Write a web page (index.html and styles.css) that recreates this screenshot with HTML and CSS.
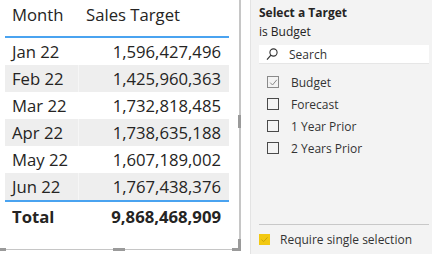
FILE: index.html
```html
<!DOCTYPE html>
<html>
<head>
<meta charset="utf-8">
<link rel="stylesheet" href="styles.css">
</head>
<body>
<div class="page">
  <div class="visual">
    <div class="table">
      <div class="row head">
        <div class="c1">Month</div>
        <div class="c2 left">Sales Target</div>
      </div>
      <div class="row"><div class="c1">Jan 22</div><div class="c2">1,596,427,496</div></div>
      <div class="row alt"><div class="c1">Feb 22</div><div class="c2">1,425,960,363</div></div>
      <div class="row"><div class="c1">Mar 22</div><div class="c2">1,732,818,485</div></div>
      <div class="row alt"><div class="c1">Apr 22</div><div class="c2">1,738,635,188</div></div>
      <div class="row"><div class="c1">May 22</div><div class="c2">1,607,189,002</div></div>
      <div class="row alt"><div class="c1">Jun 22</div><div class="c2">1,767,438,376</div></div>
      <div class="row total"><div class="c1">Total</div><div class="c2">9,868,468,909</div></div>
    </div>
    <span class="handle h-bl"></span>
    <span class="handle h-bm"></span>
    <span class="handle h-rm"></span>
    <span class="handle h-br1"></span>
    <span class="handle h-br2"></span>
  </div>
  <div class="gap"></div>
  <div class="slicer">
    <div class="title">Select a Target</div>
    <div class="sub">is Budget</div>
    <div class="search">
      <svg class="mag" width="12" height="13" viewBox="0 0 12 13"><circle cx="7.5" cy="4.5" r="3.6" fill="none" stroke="#333" stroke-width="1.1"/><line x1="4.9" y1="7.2" x2="1" y2="11.6" stroke="#333" stroke-width="1.2"/></svg>
      <span>Search</span>
    </div>
    <div class="items">
      <div class="item"><span class="box checked"><svg width="9" height="9" viewBox="0 0 9 9"><polyline points="1.2,4.6 3.5,7 7.8,1.8" fill="none" stroke="#8a8a8a" stroke-width="1"/></svg></span>Budget</div>
      <div class="item"><span class="box"></span>Forecast</div>
      <div class="item"><span class="box"></span>1 Year Prior</div>
      <div class="item"><span class="box"></span>2 Years Prior</div>
    </div>
    <div class="footer">
      <span class="ybox"><svg width="9" height="9" viewBox="0 0 9 9"><polyline points="1.5,4.6 3.6,6.6 7.5,2.4" fill="none" stroke="#c9a40b" stroke-width="1"/></svg></span>
      <span>Require single selection</span>
    </div>
  </div>
</div>
</body>
</html>
```
FILE: styles.css
```css
html, body {
  margin: 0;
  padding: 0;
  background: #ffffff;
}
body {
  width: 432px;
  height: 254px;
  overflow: hidden;
  font-family: "Open Sans", "Noto Sans", sans-serif;
  color: #252423;
}
.page {
  display: flex;
  height: 254px;
}
.visual {
  position: relative;
  width: 239px;
  height: 249px;
  border-right: 2px solid #c6c6c6;
  border-bottom: 1px solid #c6c6c6;
  background: #fff;
  flex: none;
}
.table {
  margin-left: 5px;
  width: 224px;
  font-size: 16.7px;
}
.row {
  display: flex;
  height: 27px;
  align-items: center;
}
.row.head {
  height: 38px;
  border-bottom: 2px solid #4aa3f0;
  box-sizing: border-box;
  align-items: flex-start;
  padding-top: 3px;
}
.row.alt {
  background: #eeeeee;
}
.c1 {
  width: 73px;
  padding-left: 7px;
  box-sizing: border-box;
  height: 100%;
  display: flex;
  align-items: center;
}
.row.head .c1, .row.head .c2 { height: auto; }
.c2 {
  flex: 1;
  text-align: right;
  padding-right: 8px;
  height: 100%;
  display: flex;
  align-items: center;
  justify-content: flex-end;
}
.row.alt .c2 {
  border-left: 1px solid #f6f6f6;
}
.c2.left {
  justify-content: flex-start;
  padding-left: 8px;
}
.row.total {
  border-top: 2px solid #4aa3f0;
  font-weight: 700;
  height: 29px;
}
.handle {
  position: absolute;
  background: #9a9a9a;
}
.h-bl { left: 0; bottom: -2px; width: 6px; height: 3px; }
.h-bm { left: 113px; bottom: -2px; width: 12px; height: 3px; }
.h-rm { right: -2px; top: 115px; width: 3px; height: 13px; }
.h-br1 { right: -2px; bottom: -2px; width: 9px; height: 3px; }
.h-br2 { right: -2px; bottom: -2px; width: 3px; height: 12px; }
.gap {
  width: 9px;
  flex: none;
}
.slicer {
  flex: 1;
  background: #f3f3f3;
  border-left: 1px solid #e3e3e3;
  padding: 4px 3px 0 8px;
  display: flex;
  flex-direction: column;
  font-size: 12px;
  color: #252423;
}
.title {
  font-weight: 700;
  line-height: 18px;
}
.sub {
  line-height: 18px;
  margin-top: 1px;
}
.search {
  margin-top: 4px;
  height: 18px;
  background: #fff;
  border-bottom: 1px solid #e6e6e6;
  display: flex;
  align-items: center;
  padding-left: 7px;
  color: #333;
}
.search .mag { margin-right: 11px; }
.items {
  margin-top: 7px;
  display: flex;
  flex-direction: column;
}
.item {
  height: 22px;
  display: flex;
  align-items: center;
  padding-left: 8px;
  color: #333;
}
.box {
  width: 10px;
  height: 10px;
  border: 1px solid #4a4a4a;
  margin-right: 12px;
  display: inline-flex;
  align-items: center;
  justify-content: center;
}
.box.checked {
  border-color: #8a8a8a;
}
.footer {
  margin-top: auto;
  border-top: 1px solid #c8c8c8;
  height: 29px;
  display: flex;
  align-items: center;
  color: #333;
}
.ybox {
  width: 11px;
  height: 11px;
  background: #f2c811;
  margin-right: 10px;
  display: inline-flex;
  align-items: center;
  justify-content: center;
}
```
